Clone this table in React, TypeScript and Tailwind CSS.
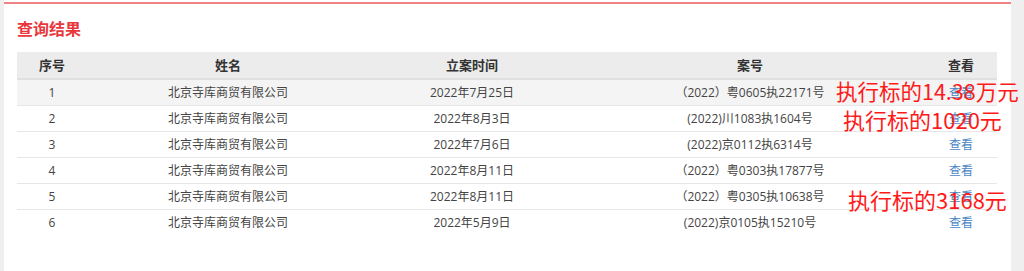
import React from "react";

const rows = [
  { no: "1", name: "北京寺库商贸有限公司", date: "2022年7月25日", case: "（2022）粤0605执22171号" },
  { no: "2", name: "北京寺库商贸有限公司", date: "2022年8月3日", case: "(2022)川1083执1604号" },
  { no: "3", name: "北京寺库商贸有限公司", date: "2022年7月6日", case: "(2022)京0112执6314号" },
  { no: "4", name: "北京寺库商贸有限公司", date: "2022年8月11日", case: "（2022）粤0303执17877号" },
  { no: "5", name: "北京寺库商贸有限公司", date: "2022年8月11日", case: "（2022）粤0305执10638号" },
  { no: "6", name: "北京寺库商贸有限公司", date: "2022年5月9日", case: "(2022)京0105执15210号" },
];

const cols = "grid grid-cols-[70px_282px_206px_350px_72px]";

export default function App() {
  return (
    <div
      className="w-[1024px] h-[271px] bg-[#efefef] pl-[4px] pr-[13px] overflow-hidden"
      style={{ fontFamily: '"Open Sans", "Noto Sans CJK SC", sans-serif' }}
    >
      <div className="relative h-full bg-white pt-[2px]">
        <div className="h-[2px] bg-[#f08484]" />
        <div className="pl-[13px] pr-[14px]">
          <h2
            className="mt-[12px] h-[24px] text-[16px] leading-[24px] font-bold text-[#e8383d]"
            style={{ fontFamily: '"Noto Sans CJK SC", sans-serif' }}
          >
            查询结果
          </h2>
          <div className="mt-[12px] w-[980px]">
            <div className={`${cols} h-[28px] bg-[#ececec] border-b-2 border-[#e0e0e0] text-[13px] font-bold text-[#333] items-center text-center`}
              style={{ fontFamily: '"Noto Sans CJK SC", sans-serif' }}>
              <div>序号</div>
              <div>姓名</div>
              <div>立案时间</div>
              <div>案号</div>
              <div>查看</div>
            </div>
            {rows.map((r, i) => (
              <div
                key={r.no}
                className={`${cols} h-[26px] items-center text-center text-[12px] text-[#444] ${i === rows.length - 1 ? "" : "border-b border-[#e6e6e6]"} ${i === 0 ? "bg-[#f4f4f4]" : "bg-white"}`}
              >
                <div>{r.no}</div>
                <div>{r.name}</div>
                <div>{r.date}</div>
                <div>{r.case}</div>
                <div className="text-[#4a86c4]">查看</div>
              </div>
            ))}
          </div>
        </div>

        <div
          className="absolute left-[832px] top-[77px] text-[21.5px] leading-[28px] text-[#ff1a1a] whitespace-nowrap"
          style={{ fontFamily: '"Noto Sans CJK SC", sans-serif' }}
        >
          执行标的14.38万元
        </div>
        <div
          className="absolute left-[839px] top-[105px] text-[22px] leading-[28px] text-[#ff1a1a] whitespace-nowrap"
          style={{ fontFamily: '"Noto Sans CJK SC", sans-serif' }}
        >
          执行标的1020元
        </div>
        <div
          className="absolute left-[844px] top-[185px] text-[22px] leading-[28px] text-[#ff1a1a] whitespace-nowrap"
          style={{ fontFamily: '"Noto Sans CJK SC", sans-serif' }}
        >
          执行标的3168元
        </div>
      </div>
    </div>
  );
}
